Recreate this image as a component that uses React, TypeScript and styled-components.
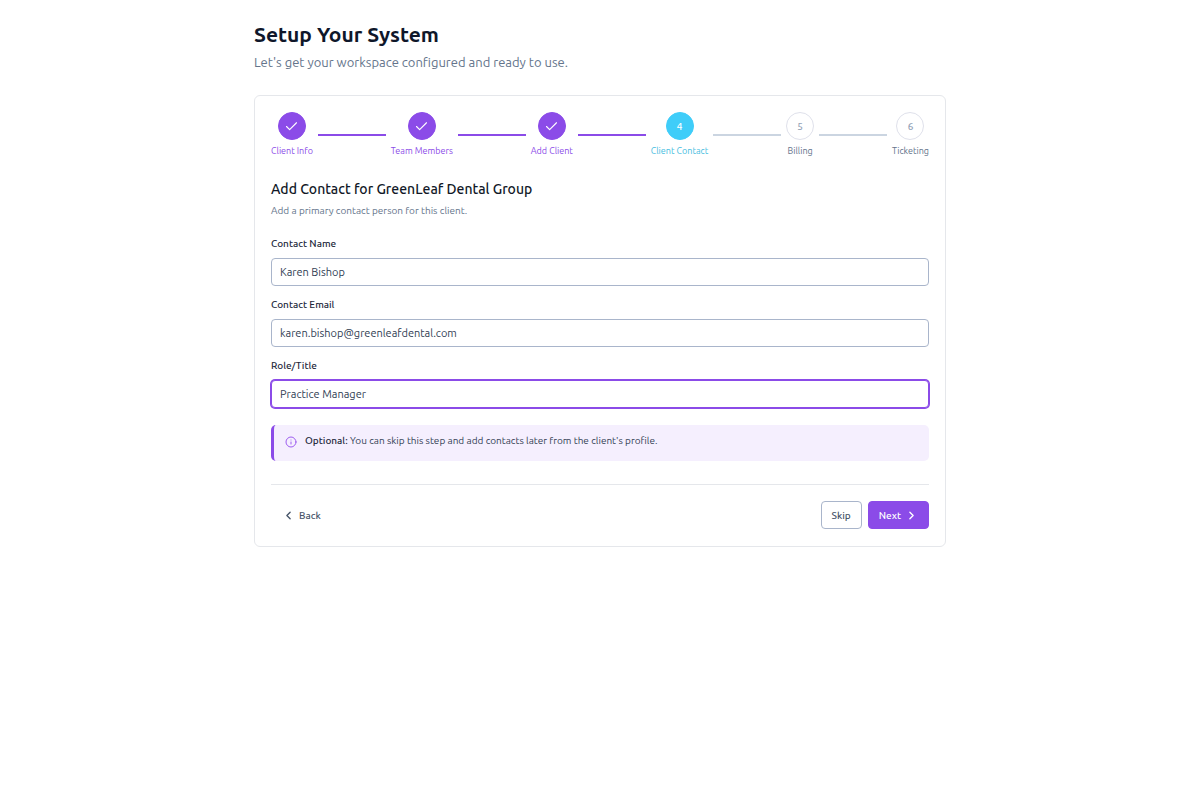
import React, { useState } from 'react';
import styled, { createGlobalStyle, css } from 'styled-components';
import { Check, ChevronLeft, ChevronRight, Info } from 'lucide-react';

const GlobalStyle = createGlobalStyle`
  *, *::before, *::after { box-sizing: border-box; }
  body {
    margin: 0;
    background: #fff;
    color: #334155;
    font-family: Ubuntu, "Noto Sans", sans-serif;
    font-size: 14px;
  }
  h1, h2, p { margin: 0; }
  button, input { font-family: inherit; }
`;

const Page = styled.main`
  width: 100%;
  max-width: 740px;
  margin: 0 auto;
  padding: 20px 24px;
`;

const Title = styled.h1`
  color: #0f172a;
  font-size: 21px;
  font-weight: 600;
  line-height: 28px;
`;

const Subtitle = styled.p`
  margin-top: 4px;
  color: #64748b;
  font-size: 13px;
  line-height: 20px;
`;

const Card = styled.section`
  margin-top: 23px;
  padding: 16px 16px 17px;
  border: 1px solid #e5e7eb;
  border-radius: 6px;
  background: #fff;
`;

const Steps = styled.ol`
  display: flex;
  align-items: center;
  gap: 5px;
  margin: 0;
  padding: 0;
  list-style: none;
`;

type StepState = 'done' | 'current' | 'todo';

const StepItem = styled.li`
  display: flex;
  flex-direction: column;
  align-items: center;
  gap: 4px;
`;

const Connector = styled.li<{ $done: boolean }>`
  flex: 1;
  height: 2px;
  background: ${({ $done }) => ($done ? '#8b4be8' : '#cbd5e1')};
`;

const circleStyles = {
  done: css`border-color: #8b4be8; background: #8b4be8; color: #fff;`,
  current: css`border-color: #3fcdf9; background: #3fcdf9; color: #fff;`,
  todo: css`border-color: #dfe1eb; background: #fff; color: #94a3b8;`,
};

const Circle = styled.span<{ $state: StepState }>`
  display: flex;
  align-items: center;
  justify-content: center;
  width: 28px;
  height: 28px;
  border: 1px solid;
  border-radius: 50%;
  font-size: 10px;
  font-weight: 500;
  ${({ $state }) => circleStyles[$state]}
`;

const labelColors = { done: '#8b4be8', current: '#45bde0', todo: '#64748b' };

const StepLabel = styled.span<{ $state: StepState }>`
  color: ${({ $state }) => labelColors[$state]};
  font-size: 9px;
  line-height: 14px;
  white-space: nowrap;
`;

const FormTitle = styled.h2`
  margin-top: 21px;
  color: #111827;
  font-size: 14px;
  font-weight: 500;
  line-height: 20px;
`;

const FormText = styled.p`
  margin-top: 4px;
  color: #64748b;
  font-size: 10px;
  line-height: 16px;
`;

const Fields = styled.div`
  display: grid;
  gap: 12px;
  margin-top: 18px;
`;

const Field = styled.div`
  display: flex;
  flex-direction: column;
  gap: 7px;
`;

const Label = styled.label`
  color: #1e293b;
  font-size: 10px;
  font-weight: 500;
  line-height: 14px;
`;

const Input = styled.input`
  width: 100%;
  height: 28px;
  padding: 0 8px;
  border: 1px solid #a9b5cb;
  border-radius: 4px;
  outline: none;
  background: #fff;
  color: #334155;
  font-size: 11px;

  &:focus {
    border-color: #8b4be8;
    box-shadow: 0 0 0 1px #8b4be8;
  }
`;

const Notice = styled.div`
  display: flex;
  align-items: flex-start;
  gap: 8px;
  min-height: 36px;
  margin-top: 17px;
  padding: 8px 11px;
  border-left: 3px solid #8b4be8;
  border-radius: 5px;
  background: #f5effe;
  color: #334155;
  font-size: 10px;
  line-height: 15px;

  svg { flex: none; margin-top: 3px; color: #9d5cf0; }
  strong { color: #1e293b; font-weight: 500; }
`;

const Actions = styled.footer`
  display: flex;
  align-items: center;
  gap: 6px;
  margin-top: 23px;
  padding-top: 16px;
  border-top: 1px solid #e5e7eb;
`;

const variants = {
  ghost: css`border-color: transparent; background: transparent; color: #475569; margin-right: auto;`,
  outline: css`border-color: #a9b5cb; background: #fff; color: #475569;`,
  primary: css`border-color: #8b4be8; background: #8b4be8; color: #fff;`,
};

const Button = styled.button<{ $variant: keyof typeof variants }>`
  display: inline-flex;
  align-items: center;
  gap: 4px;
  height: 28px;
  padding: 0 10px;
  border: 1px solid;
  border-radius: 4px;
  font-size: 10px;
  font-weight: 500;
  cursor: pointer;
  ${({ $variant }) => variants[$variant]}
`;

const stepNames = ['Client Info', 'Team Members', 'Add Client', 'Client Contact', 'Billing', 'Ticketing'];
const currentStep = 3;

const fields = [
  { id: 'name', label: 'Contact Name', type: 'text', value: 'Karen Bishop' },
  { id: 'email', label: 'Contact Email', type: 'email', value: 'karen.bishop@greenleafdental.com' },
  { id: 'role', label: 'Role/Title', type: 'text', value: 'Practice Manager' },
];

function stateOf(index: number): StepState {
  if (index < currentStep) return 'done';
  return index === currentStep ? 'current' : 'todo';
}

function Stepper() {
  return (
    <Steps>
      {stepNames.map((name, i) => {
        const state = stateOf(i);
        return (
          <React.Fragment key={name}>
            {i > 0 && <Connector $done={i <= currentStep} aria-hidden="true" />}
            <StepItem aria-current={state === 'current' ? 'step' : undefined}>
              <Circle $state={state}>
                {state === 'done' ? <Check size={15} strokeWidth={1.75} /> : i + 1}
              </Circle>
              <StepLabel $state={state}>{name}</StepLabel>
            </StepItem>
          </React.Fragment>
        );
      })}
    </Steps>
  );
}

export default function App() {
  const [values, setValues] = useState<Record<string, string>>(
    Object.fromEntries(fields.map((f) => [f.id, f.value])),
  );

  return (
    <>
      <GlobalStyle />
      <Page>
        <Title>Setup Your System</Title>
        <Subtitle>Let's get your workspace configured and ready to use.</Subtitle>
        <Card>
          <Stepper />
          <FormTitle>Add Contact for GreenLeaf Dental Group</FormTitle>
          <FormText>Add a primary contact person for this client.</FormText>
          <Fields>
            {fields.map((f) => (
              <Field key={f.id}>
                <Label htmlFor={f.id}>{f.label}</Label>
                <Input
                  id={f.id}
                  type={f.type}
                  value={values[f.id]}
                  autoFocus={f.id === 'role'}
                  onChange={(e) => setValues({ ...values, [f.id]: e.target.value })}
                />
              </Field>
            ))}
          </Fields>
          <Notice>
            <Info size={12} />
            <p>
              <strong>Optional:</strong> You can skip this step and add contacts later from the client's profile.
            </p>
          </Notice>
          <Actions>
            <Button type="button" $variant="ghost">
              <ChevronLeft size={13} strokeWidth={2.5} />
              Back
            </Button>
            <Button type="button" $variant="outline">Skip</Button>
            <Button type="button" $variant="primary">
              Next
              <ChevronRight size={13} strokeWidth={2.5} />
            </Button>
          </Actions>
        </Card>
      </Page>
    </>
  );
}
